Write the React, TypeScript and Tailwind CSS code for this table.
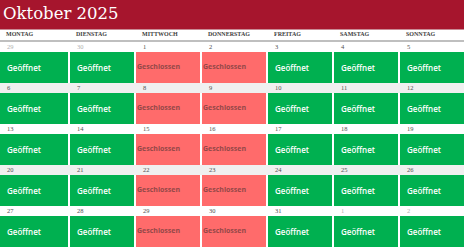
import React from "react";

type Day = { n: number; other: boolean; open: boolean };

const headers = ["Montag", "Dienstag", "Mittwoch", "Donnerstag", "Freitag", "Samstag", "Sonntag"];

// Mittwoch + Donnerstag geschlossen
function buildWeeks(): Day[][] {
  const days: Day[] = [];
  days.push({ n: 29, other: true, open: true });
  days.push({ n: 30, other: true, open: true });
  for (let i = 1; i <= 31; i++) days.push({ n: i, other: false, open: true });
  days.push({ n: 1, other: true, open: true });
  days.push({ n: 2, other: true, open: true });
  const weeks: Day[][] = [];
  for (let w = 0; w < 5; w++) {
    weeks.push(
      days.slice(w * 7, w * 7 + 7).map((d, i) => ({ ...d, open: !(i === 2 || i === 3) }))
    );
  }
  return weeks;
}

const cols = "grid grid-cols-[68px_repeat(6,64px)] gap-x-[2px]";

export default function App() {
  const weeks = buildWeeks();

  return (
    <div className="w-[464px] h-[247px] overflow-hidden bg-white">
      <div className="h-[30px] bg-[#a6152d] flex items-center pl-[3px] border-b border-[#c98a94]">
        <h1
          className="text-white text-[16.5px] leading-none"
          style={{ fontFamily: "'DejaVu Serif', serif" }}
        >
          Oktober 2025
        </h1>
      </div>

      <div className={`${cols} h-[12px] border-b-2 border-[#bfbfbf]`}>
        {headers.map((h) => (
          <div
            key={h}
            className="pl-[6px] text-[6px] leading-[9px] uppercase text-[#404040] font-bold"
            style={{ fontFamily: "'Liberation Serif', serif" }}
          >
            {h}
          </div>
        ))}
      </div>

      {weeks.map((week, w) => (
        <div key={w}>
          <div className={`${cols} h-[10px] ${w % 2 === 1 ? "bg-[#f0f0f0]" : "bg-white"}`}>
            {week.map((d, i) => (
              <div
                key={i}
                className={`pl-[7px] text-[6.5px] leading-[10px] ${d.other ? "text-[#b0b0b0]" : "text-[#505050]"}`}
                style={{ fontFamily: "'Liberation Serif', serif" }}
              >
                {d.n}
              </div>
            ))}
          </div>
          <div className={`${cols} h-[31px]`}>
            {week.map((d, i) =>
              d.open ? (
                <div
                  key={i}
                  className="bg-[#00b050] flex items-center pl-[7px] text-white text-[8px] font-semibold"
                  style={{ fontFamily: "'Open Sans', sans-serif" }}
                >
                  Geöffnet
                </div>
              ) : (
                <div
                  key={i}
                  className="bg-[#ff6b6b] flex items-center pl-[1px] text-[#944848] text-[7px] font-bold"
                  style={{ fontFamily: "'Open Sans', sans-serif" }}
                >
                  Geschlossen
                </div>
              )
            )}
          </div>
        </div>
      ))}
    </div>
  );
}
